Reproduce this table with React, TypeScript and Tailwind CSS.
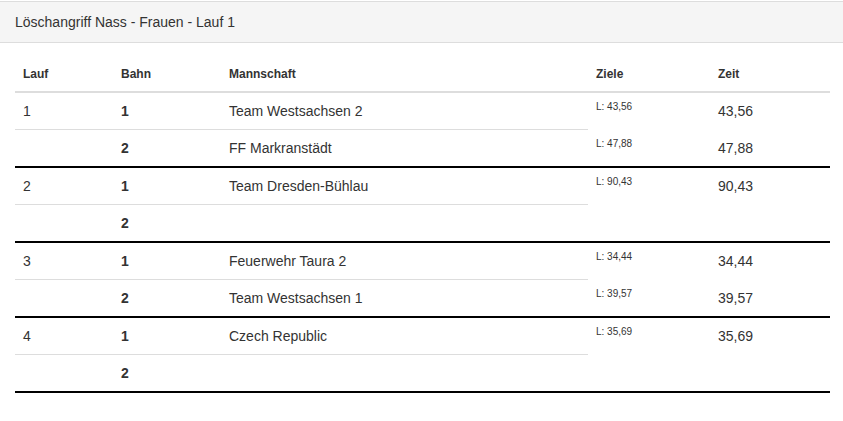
const races = [
  {
    lauf: "1",
    lanes: [
      { bahn: "1", team: "Team Westsachsen 2", ziele: "L: 43,56", zeit: "43,56" },
      { bahn: "2", team: "FF Markranstädt", ziele: "L: 47,88", zeit: "47,88" },
    ],
  },
  {
    lauf: "2",
    lanes: [
      { bahn: "1", team: "Team Dresden-Bühlau", ziele: "L: 90,43", zeit: "90,43" },
      { bahn: "2", team: "", ziele: "", zeit: "" },
    ],
  },
  {
    lauf: "3",
    lanes: [
      { bahn: "1", team: "Feuerwehr Taura 2", ziele: "L: 34,44", zeit: "34,44" },
      { bahn: "2", team: "Team Westsachsen 1", ziele: "L: 39,57", zeit: "39,57" },
    ],
  },
  {
    lauf: "4",
    lanes: [
      { bahn: "1", team: "Czech Republic", ziele: "L: 35,69", zeit: "35,69" },
      { bahn: "2", team: "", ziele: "", zeit: "" },
    ],
  },
];

export default function App() {
  return (
    <div
      className="min-h-[421px] bg-white pt-px text-[14px] leading-5 text-[#333]"
      style={{ fontFamily: '"Liberation Sans", Arial, sans-serif' }}
    >
      <div className="border-t border-b border-[#ddd] bg-[#f5f5f5] px-[15px] py-[10px]">
        Löschangriff Nass - Frauen - Lauf 1
      </div>

      <div className="p-[15px]">
        <table className="w-[815px] table-fixed border-separate border-spacing-0">
          <colgroup>
            <col className="w-[98px]" />
            <col className="w-[108px]" />
            <col className="w-[367px]" />
            <col className="w-[122px]" />
            <col className="w-[120px]" />
          </colgroup>
          <thead>
            <tr>
              {["Lauf", "Bahn", "Mannschaft", "Ziele", "Zeit"].map((h) => (
                <th
                  key={h}
                  className="border-b-2 border-[#ddd] p-2 text-left align-bottom text-[12px] font-bold leading-[17px]"
                >
                  {h}
                </th>
              ))}
            </tr>
          </thead>
          <tbody>
            {races.map((race) =>
              race.lanes.map((lane, i) => {
                const last = i === race.lanes.length - 1;
                const top = i > 0 ? "border-t" : "";
                const bottom = last ? "border-b-2 border-b-black" : "";
                return (
                  <tr key={race.lauf + lane.bahn}>
                    <td className={`${top} ${bottom} border-t-[#ddd] p-2 align-top`}>
                      {i === 0 ? race.lauf : ""}
                    </td>
                    <td className={`${top} ${bottom} border-t-[#ddd] p-2 align-top font-bold`}>
                      {lane.bahn}
                    </td>
                    <td className={`${top} ${bottom} border-t-[#ddd] p-2 align-top`}>
                      {lane.team}
                    </td>
                    <td className={`${top} ${bottom} border-t-transparent p-2 align-top`}>
                      <div className="text-[10px] leading-3">{lane.ziele}</div>
                    </td>
                    <td className={`${top} ${bottom} border-t-transparent p-2 align-top`}>
                      {lane.zeit}
                    </td>
                  </tr>
                );
              })
            )}
          </tbody>
        </table>
      </div>
    </div>
  );
}
